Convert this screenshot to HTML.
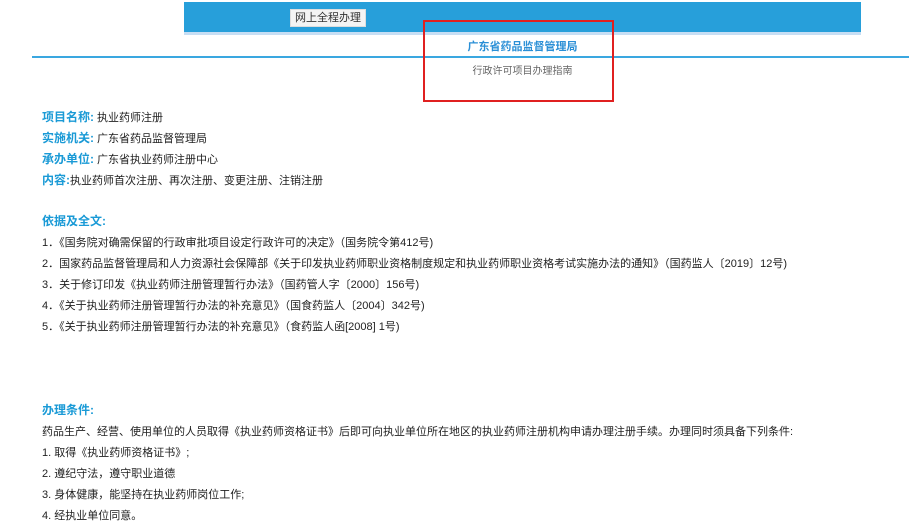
<!DOCTYPE html>
<html><head><meta charset="utf-8"><style>
body{margin:0;width:909px;height:519px;overflow:hidden;background:#fff;font-family:"Liberation Sans","Microsoft YaHei","Noto Sans CJK SC",sans-serif;font-size:11px;color:#222;position:relative}
.a{position:absolute;white-space:nowrap}
.bar{left:184px;top:2px;width:677px;height:30px;background:#279fda;border-bottom:3px solid #c7def4}
.btn{left:290px;top:9px;width:76px;height:18px;background:#f4f4f4;border:1px solid #ddd;box-sizing:border-box;text-align:center;line-height:17px;font-size:11px;color:#333}
.line{left:32px;top:56px;width:877px;height:2px;background:#3aa7e0}
.red{left:423px;top:20px;width:191px;height:82px;border:2px solid #e02020;box-sizing:border-box}
.b{color:#1a9ad6;font-weight:bold;font-size:12px}
.t{left:42px}
</style></head><body>
<div class="a bar"></div>
<div class="a btn">网上全程办理</div>
<div class="a line"></div>
<div class="a" style="left:428px;width:189px;top:38px;text-align:center;color:#2a8fd6;font-weight:bold;font-size:11px">广东省药品监督管理局</div>
<div class="a" style="left:428px;width:189px;top:62px;text-align:center;color:#666;font-size:10px">行政许可项目办理指南</div>
<div class="a red"></div>
<div class="a t" style="top:108px"><span class="b">项目名称:</span> 执业药师注册</div>
<div class="a t" style="top:129px"><span class="b">实施机关:</span> 广东省药品监督管理局</div>
<div class="a t" style="top:150px"><span class="b">承办单位:</span> 广东省执业药师注册中心</div>
<div class="a t" style="top:171px"><span class="b">内容:</span>执业药师首次注册、再次注册、变更注册、注销注册</div>
<div class="a t b" style="top:212px">依据及全文:</div>
<div class="a t" style="top:234px">1．《国务院对确需保留的行政审批项目设定行政许可的决定》（国务院令第412号)</div>
<div class="a t" style="top:255px">2．国家药品监督管理局和人力资源社会保障部《关于印发执业药师职业资格制度规定和执业药师职业资格考试实施办法的通知》（国药监人〔2019〕12号)</div>
<div class="a t" style="top:276px">3．关于修订印发《执业药师注册管理暂行办法》（国药管人字〔2000〕156号)</div>
<div class="a t" style="top:297px">4．《关于执业药师注册管理暂行办法的补充意见》（国食药监人〔2004〕342号)</div>
<div class="a t" style="top:318px">5．《关于执业药师注册管理暂行办法的补充意见》（食药监人函[2008] 1号)</div>
<div class="a t b" style="top:401px">办理条件:</div>
<div class="a t" style="top:423px">药品生产、经营、使用单位的人员取得《执业药师资格证书》后即可向执业单位所在地区的执业药师注册机构申请办理注册手续。办理同时须具备下列条件:</div>
<div class="a t" style="top:444px">1. 取得《执业药师资格证书》;</div>
<div class="a t" style="top:465px">2. 遵纪守法，遵守职业道德</div>
<div class="a t" style="top:486px">3. 身体健康，能坚持在执业药师岗位工作;</div>
<div class="a t" style="top:507px">4. 经执业单位同意。</div>
</body></html>
